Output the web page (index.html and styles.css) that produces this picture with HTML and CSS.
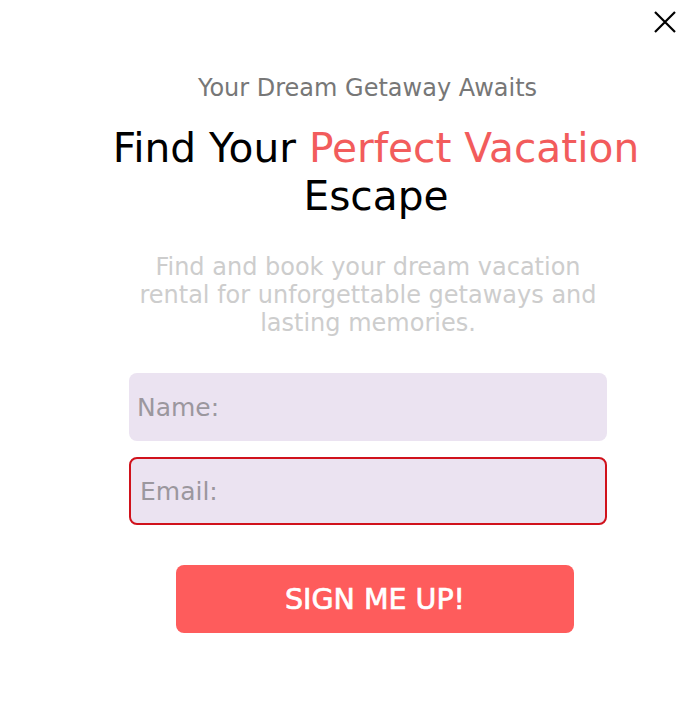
FILE: index.html
```html
<!DOCTYPE html>
<html>
  <head>
    <title>Perfect Vacation</title>
    <link rel="stylesheet" href="styles.css">
  </head>
  <body>
    <button class="close" aria-label="Close">
      <svg width="24" height="24" viewBox="0 0 24 24"><path d="M2 2L22 22M22 2L2 22" stroke="#000" stroke-width="2.2" fill="none"/></svg>
    </button>

    <div class="popup">
      <p class="kicker">Your Dream Getaway Awaits</p>
      <h1 class="title">Find Your <span class="accent">Perfect Vacation</span> Escape</h1>
      <p class="lead">Find and book your dream vacation rental for unforgettable getaways and lasting memories.</p>

      <form class="signup" action="">
        <input class="field" placeholder="Name:" autocomplete="off" />
        <input class="field field-error" placeholder="Email:" autocomplete="off" />
        <button class="submit">SIGN ME UP!</button>
      </form>
    </div>
  </body>
</html>
```

FILE: styles.css
```css
html, body { width: 100%; height: 100%; }
body { margin: 0; background: #fff; color: #000; font-family: "DejaVu Sans", "Open Sans", sans-serif; }

.close { position: absolute; top: 10px; right: 16px; background: none; border: none; padding: 0; cursor: pointer; }

.popup { width: 580px; margin-left: 84px; padding-top: 72px; display: flex; flex-direction: column; align-items: center; text-align: center; }
.kicker { margin: 0 0 0 -13px; font-size: 24px; color: #777; line-height: 32px; }
.title { margin: 20px 0 0; padding-left: 4px; font-size: 40.7px; font-weight: 400; line-height: 48px; }
.accent { color: #f25c5c; }
.lead { margin: 33px 0 0 -12px; width: 480px; font-size: 24px; line-height: 28px; color: #cdcdcd; }

.signup { margin-top: 36px; display: flex; flex-direction: column; align-items: center; }
.field { width: 478px; height: 68px; box-sizing: border-box; border: none; border-radius: 8px; background: #ebe3f1; padding: 0 8px; font-family: inherit; font-size: 25px; color: #333; outline: none; margin-left: -12px; }
.field::placeholder { color: #9b979e; }
.field + .field { margin-top: 16px; }
.field-error { border: 2px solid #d0121c; padding-left: 9px; }
.submit { margin-top: 40px; margin-left: 2px; width: 398px; height: 68px; border: none; border-radius: 8px; background: #fe5c5c; color: #fff; font-family: inherit; font-size: 28.5px; font-weight: 400; -webkit-text-stroke: 0.7px #fff; cursor: pointer; }
```
